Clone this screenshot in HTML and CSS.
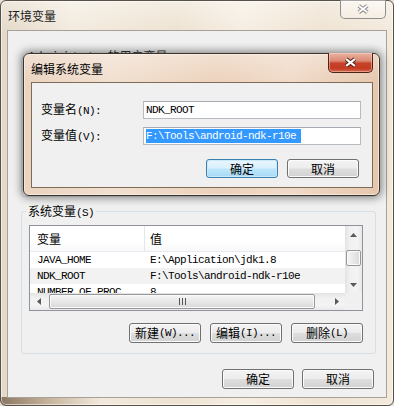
FILE: index.html
```html
<!DOCTYPE html>
<html>
<head>
<meta charset="utf-8">
<link rel="stylesheet" href="styles.css">
</head>
<body>
<div class="win">
  <div class="titlebar">
    <span class="title">环境变量</span>
    <div class="close inactive">
      <svg width="46" height="19" viewBox="0 0 46 19"><path d="M18.5 5.5 L27.5 12.5 M27.5 5.5 L18.5 12.5" stroke="#8a8a8a" stroke-width="4" fill="none"/><path d="M18.5 5.5 L27.5 12.5 M27.5 5.5 L18.5 12.5" stroke="#ffffff" stroke-width="2" fill="none"/></svg>
    </div>
  </div>
  <div class="client">
    <div class="group user">
      <span class="legend">Administrator 的用户变量<span class="en">(U)</span></span>
    </div>
    <div class="group sys">
      <span class="legend">系统变量<span class="en">(S)</span></span>
      <div class="listbox">
        <div class="lv">
          <div class="lv-row lv-head"><span class="c1">变量</span><span class="c2">值</span></div>
          <div class="lv-row"><span class="c1 m">JAVA_HOME</span><span class="c2 m">E:\Application\jdk1.8</span></div>
          <div class="lv-row sel"><span class="c1 m">NDK_ROOT</span><span class="c2 m">F:\Tools\android-ndk-r10e</span></div>
          <div class="lv-row"><span class="c1 m">NUMBER_OF_PROC</span><span class="c2 m">8</span></div>
        </div>
        <div class="vscroll">
          <div class="arrow"><svg width="7" height="4" viewBox="0 0 7 4"><polygon points="0,4 3.5,0 7,4" fill="#5a5a5a"/></svg></div>
          <div class="vthumb"></div>
          <div class="arrow down"><svg width="7" height="4" viewBox="0 0 7 4"><polygon points="0,0 3.5,4 7,0" fill="#5a5a5a"/></svg></div>
        </div>
        <div class="hscroll">
          <div class="arrow"><svg width="4" height="7" viewBox="0 0 4 7"><polygon points="4,0 0,3.5 4,7" fill="#5a5a5a"/></svg></div>
          <div class="hthumb"><svg width="7" height="7" viewBox="0 0 7 7"><path d="M0.5 0 V7 M3.5 0 V7 M6.5 0 V7" stroke="#555" stroke-width="1"/></svg></div>
          <div class="arrow right"><svg width="4" height="7" viewBox="0 0 4 7"><polygon points="0,0 4,3.5 0,7" fill="#5a5a5a"/></svg></div>
        </div>
        <div class="corner"></div>
      </div>
      <div class="btnrow">
        <div class="btn">新建<span class="en">(W)...</span></div>
        <div class="btn">编辑<span class="en">(I)...</span></div>
        <div class="btn">删除<span class="en">(L)</span></div>
      </div>
    </div>
    <div class="btnrow bottom">
      <div class="btn">确定</div>
      <div class="btn">取消</div>
    </div>
  </div>

  <div class="dialog">
    <div class="dlg-title">
      <span class="title">编辑系统变量</span>
      <div class="close red">
        <svg width="45" height="20" viewBox="0 0 45 20"><path d="M18 6 L27 13 M27 6 L18 13" stroke="#4a1c12" stroke-width="4.2" fill="none"/><path d="M18 6 L27 13 M27 6 L18 13" stroke="#ffffff" stroke-width="2.2" fill="none"/></svg>
      </div>
    </div>
    <div class="dlg-client">
      <div class="field">
        <span class="label">变量名<span class="en">(N):</span></span>
        <div class="input"><span class="m">NDK_ROOT</span></div>
      </div>
      <div class="field">
        <span class="label">变量值<span class="en">(V):</span></span>
        <div class="input"><span class="m hl">F:\Tools\android-ndk-r10e</span></div>
      </div>
      <div class="dlg-btns">
        <div class="btn default">确定</div>
        <div class="btn">取消</div>
      </div>
    </div>
  </div>
</div>
</body>
</html>
```

FILE: styles.css
```css
* { box-sizing: border-box; }

body {
  margin: 0;
  width: 394px;
  height: 406px;
  overflow: hidden;
  background: #e6dfd4;
  font-family: "Noto Sans CJK SC", "Noto Sans", sans-serif;
  font-size: 12px;
  color: #000;
}

.en, .m {
  font-family: "Liberation Mono", "DejaVu Sans Mono", monospace;
  font-size: 11px;
  letter-spacing: -0.6px;
}

.win {
  position: relative;
  width: 394px;
  height: 406px;
  border: 1px solid #57514a;
  border-radius: 6px;
  box-shadow: inset 0 0 0 1px rgba(255,255,255,0.55);
  background:
    linear-gradient(90deg, #8c7762 0%, #c9b69e 25%, rgba(233,223,208,0) 50%) left bottom / 200px 8px no-repeat,
    linear-gradient(180deg, rgba(255,255,255,0.35) 0, rgba(255,255,255,0) 30px),
    linear-gradient(90deg, #e4d9c9 0%, #f3ebdf 18%, #eee3d2 45%, #f6eee3 62%, #efe3d2 82%, #f3eadd 100%);
  display: flex;
  flex-direction: column;
}

.titlebar {
  height: 29px;
  display: flex;
  justify-content: space-between;
  align-items: flex-start;
  padding: 0 7px;
}

.title {
  margin-top: 8px;
  line-height: 14px;
  color: #1a1a1a;
}

.close {
  margin-top: -1px;
  border-radius: 0 0 5px 5px;
  display: flex;
}

.close.inactive {
  width: 46px;
  height: 19px;
  border: 1px solid #8e8e8e;
  border-top: none;
  background: linear-gradient(180deg, rgba(255,255,255,0.5), rgba(255,255,255,0.15));
}

.close.red {
  width: 45px;
  height: 20px;
  border: 1px solid #4a2218;
  border-top: none;
  background: linear-gradient(180deg, #eab2a2 0%, #dc8b76 40%, #c8412a 55%, #c23a22 80%, #d66a4e 100%);
  box-shadow: inset 0 0 0 1px rgba(255,220,210,0.45);
}

.close svg { display: block; }

.client {
  margin: 0 6px;
  height: 368px;
  border: 1px solid #a8a197;
  background: #f0f0f0;
  display: flex;
  flex-direction: column;
}

.group {
  margin-left: 13px;
  margin-right: 10px;
  border: 1px solid #d5dfe5;
  border-radius: 3px;
  padding: 0 12px 0 7px;
}

.user {
  margin-top: 25px;
  height: 141px;
}

.user .legend { color: #333; }

.sys {
  margin-top: 14px;
  padding-bottom: 10px;
}

.legend {
  display: block;
  width: max-content;
  margin: -8px 0 0 -3px;
  padding: 0 2px;
  background: #f0f0f0;
  line-height: 14px;
}

.listbox {
  margin-top: 5px;
  width: 334px;
  height: 86px;
  border: 1px solid #8f949b;
  background: #fff;
  display: grid;
  grid-template-columns: 1fr 17px;
  grid-template-rows: 1fr 17px;
}

.lv { overflow: hidden; }

.lv-row {
  display: flex;
  height: 16px;
  align-items: center;
  white-space: nowrap;
}

.lv-head {
  height: 26px;
  background: linear-gradient(180deg, #ffffff 0%, #ffffff 60%, #f7f8f9 100%);
  border-bottom: 1px solid #e8eaed;
}

.c1 { width: 115px; padding-left: 7px; flex: none; }
.c2 { padding-left: 5px; }

.lv-head .c1 {
  width: 115px;
  height: 100%;
  display: flex;
  align-items: center;
  border-right: 1px solid #e3e5e8;
}

.lv-head .c2 { padding-left: 5px; }

.sel { background: #f2f2f2; }

.vscroll {
  grid-row: 1 / 2;
  grid-column: 2 / 3;
  background: linear-gradient(90deg, #e3e3e3, #f1f1f1 30%, #f4f4f4 70%, #e9e9e9);
  display: flex;
  flex-direction: column;
  align-items: center;
}

.arrow {
  width: 17px;
  height: 17px;
  flex: none;
  display: flex;
  align-items: center;
  justify-content: center;
}

.arrow.down { margin-top: auto; }

.vthumb {
  margin-top: 7px;
  width: 15px;
  height: 16px;
  border: 1px solid #979797;
  border-radius: 2px;
  background: linear-gradient(90deg, #f5f5f5, #e8e8e8 50%, #dadada);
  box-shadow: inset 0 0 0 1px #fafafa;
}

.hscroll {
  grid-row: 2 / 3;
  grid-column: 1 / 2;
  background: linear-gradient(180deg, #e3e3e3, #f1f1f1 30%, #f4f4f4 70%, #e9e9e9);
  display: flex;
  align-items: center;
}

.arrow.right { margin-left: auto; }

.hthumb {
  margin-left: 2px;
  width: 266px;
  height: 15px;
  border: 1px solid #979797;
  border-radius: 2px;
  background: linear-gradient(180deg, #f5f5f5, #e8e8e8 50%, #d8d8d8);
  box-shadow: inset 0 0 0 1px #fafafa;
  display: flex;
  align-items: center;
  justify-content: center;
}

.hthumb svg { display: block; }

.corner {
  grid-row: 2 / 3;
  grid-column: 2 / 3;
  background: #f0f0f0;
}

.btnrow {
  display: flex;
  justify-content: flex-end;
  gap: 9px;
  margin-top: 12px;
}

.btnrow.bottom {
  margin-top: 15px;
  margin-right: 12px;
  gap: 8px;
}

.btn {
  width: 72px;
  height: 20px;
  border: 1px solid #707070;
  border-radius: 3px;
  background: linear-gradient(180deg, #f4f4f4 0%, #ececec 48%, #dedede 52%, #d2d2d2 100%);
  box-shadow: inset 0 0 0 1px #fbfbfb;
  display: flex;
  align-items: center;
  justify-content: center;
  line-height: 14px;
  white-space: nowrap;
}

.dialog {
  position: absolute;
  left: 22px;
  top: 52px;
  width: 357px;
  height: 143px;
  border: 1px solid #3a322b;
  border-radius: 6px;
  background:
    linear-gradient(180deg, rgba(255,255,255,0.3) 0, rgba(255,255,255,0) 28px),
    linear-gradient(90deg, #ead3bf 0%, #f1dfcf 25%, #ecd2bc 55%, #f0dac8 75%, #e6c7ad 100%);
  box-shadow: 0 0 9px 2px rgba(0,0,0,0.45), inset 0 0 0 1px rgba(255,245,235,0.6);
  display: flex;
  flex-direction: column;
}

.dlg-title {
  height: 28px;
  display: flex;
  justify-content: space-between;
  align-items: flex-start;
  padding: 0 6px 0 7px;
}

.dlg-title .title { color: #000; }

.dlg-client {
  margin: 0 6px 0 7px;
  height: 106px;
  border: 1px solid #7e6b58;
  background: #f0f0f0;
  padding: 18px 13px 0 9px;
}

.field {
  display: grid;
  grid-template-columns: 102px 218px;
  align-items: center;
  height: 18px;
}

.field + .field { margin-top: 8px; }

.label { line-height: 14px; }

.input {
  height: 18px;
  border: 1px solid #b7bcc3;
  border-top-color: #a6abb3;
  background: #fff;
  padding-left: 2px;
  display: flex;
  align-items: center;
  white-space: nowrap;
}

.hl {
  background: #3399ff;
  color: #fff;
  line-height: 14px;
  padding-right: 5px;
}

.dlg-btns {
  display: flex;
  justify-content: flex-end;
  gap: 9px;
  margin-top: 14px;
}

.dlg-btns .btn { height: 19px; }

.btn.default {
  border-color: #3c7fb1;
  background: linear-gradient(180deg, #eaf6fd 0%, #d9f0fc 48%, #bee6fd 52%, #a7d9f5 100%);
  box-shadow: inset 0 0 0 1px #c9eafb;
}
```
